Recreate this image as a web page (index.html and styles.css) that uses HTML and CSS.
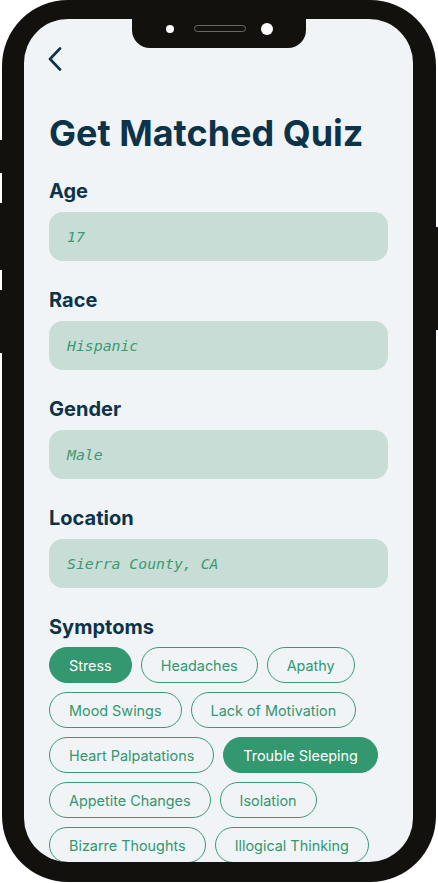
FILE: index.html
```html
<!DOCTYPE html>
<html lang="en">
<head>
<meta charset="utf-8">
<title>Get Matched Quiz</title>
<link rel="stylesheet" href="styles.css">
</head>
<body>
<div class="phone">
  <span class="btn btn-mute"></span>
  <span class="btn btn-vol-up"></span>
  <span class="btn btn-vol-down"></span>
  <span class="btn btn-power"></span>
  <div class="screen">
    <div class="notch">
      <span class="sensor"></span>
      <span class="speaker"></span>
      <span class="camera"></span>
    </div>
    <a class="back" href="#" aria-label="Back">
      <svg width="16" height="24" viewBox="0 0 16 24"><path d="M13 1.5 L3 12 L13 22.5" fill="none" stroke="#0d3349" stroke-width="2.6" stroke-linecap="round" stroke-linejoin="round"/></svg>
    </a>
    <h1 class="title">Get Matched Quiz</h1>
    <div class="field">
      <label class="label">Age</label>
      <div class="input">17</div>
    </div>
    <div class="field">
      <label class="label">Race</label>
      <div class="input">Hispanic</div>
    </div>
    <div class="field">
      <label class="label">Gender</label>
      <div class="input">Male</div>
    </div>
    <div class="field">
      <label class="label">Location</label>
      <div class="input">Sierra County, CA</div>
    </div>
    <div class="field">
      <label class="label">Symptoms</label>
      <div class="chips">
        <span class="chip on">Stress</span>
        <span class="chip">Headaches</span>
        <span class="chip">Apathy</span>
        <span class="chip">Mood Swings</span>
        <span class="chip">Lack of Motivation</span>
        <span class="chip">Heart Palpatations</span>
        <span class="chip on">Trouble Sleeping</span>
        <span class="chip">Appetite Changes</span>
        <span class="chip">Isolation</span>
        <span class="chip">Bizarre Thoughts</span>
        <span class="chip">Illogical Thinking</span>
      </div>
    </div>
  </div>
</div>
</body>
</html>
```

FILE: styles.css
```css
* { box-sizing: border-box; }
html, body { margin: 0; padding: 0; background: #ffffff; }
body { font-family: Inter, "Noto Sans", sans-serif; }

.phone {
  position: relative;
  width: 434px;
  height: 882px;
  margin-left: 2px;
  background: #13110d;
  border-radius: 66px;
  padding: 19px 23px 20px 22px;
}

.btn { position: absolute; background: #13110d; width: 8px; }
.btn-mute { left: -2px; top: 140px; height: 33px; }
.btn-vol-up { left: -2px; top: 203px; height: 67px; }
.btn-vol-down { left: -2px; top: 290px; height: 63px; }
.btn-power { right: -2px; top: 227px; height: 103px; }

.screen {
  position: relative;
  height: 843px;
  background: #f0f4f7;
  border-radius: 44px;
  overflow: hidden;
  padding: 0 25px;
}

.notch {
  position: absolute;
  left: 108px;
  top: 0;
  width: 174px;
  height: 29px;
  background: #13110d;
  border-radius: 0 0 18px 18px;
}
.sensor { position: absolute; left: 34px; top: 6px; width: 8px; height: 8px; border-radius: 50%; background: #fff; }
.speaker { position: absolute; left: 62px; top: 6px; width: 52px; height: 7px; border-radius: 4px; border: 1px solid #6b6862; background: #13110d; }
.camera { position: absolute; left: 129px; top: 4px; width: 12px; height: 12px; border-radius: 50%; background: #fff; }

.back { display: block; width: 16px; height: 24px; margin: 28px 0 0 -2px; }
.back svg { display: block; }

.title {
  margin: 41px 0 0 0;
  font-size: 36px;
  line-height: 42px;
  font-weight: 700;
  color: #0d3349;
  letter-spacing: 0;
}

.field { margin-top: 25px; }
.field + .field { margin-top: 27px; }
.label {
  display: block;
  font-size: 20px;
  line-height: 24px;
  font-weight: 700;
  color: #0d3349;
}
.input {
  margin-top: 9px;
  height: 49px;
  border-radius: 14px;
  background: #c7ddd5;
  padding: 0 18px;
  display: flex;
  align-items: center;
  font-family: "DejaVu Sans Mono", monospace;
  font-style: italic;
  font-size: 14.8px;
  color: #3a9a74;
}

.chips {
  margin-top: 8px;
  display: flex;
  flex-wrap: wrap;
  gap: 9px 9px;
}
.chip {
  height: 36px;
  padding: 0 19px;
  border: 1.5px solid #3a9a74;
  border-radius: 18px;
  display: inline-flex;
  align-items: center;
  font-size: 14.4px;
  color: #33976f;
}
.chip.on { background: #33976f; color: #ffffff; border-color: #33976f; }
```
